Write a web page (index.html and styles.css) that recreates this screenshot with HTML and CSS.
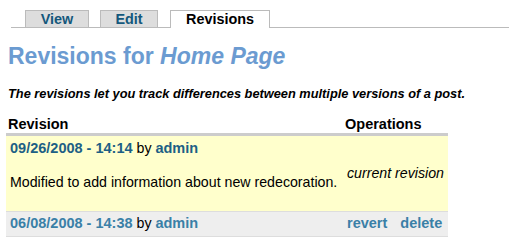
FILE: index.html
```html
<!DOCTYPE html>
<html>
<head>
<meta charset="utf-8">
<link rel="stylesheet" href="styles.css">
</head>
<body>
<div class="page">
  <ul class="tabs">
    <li class="tab tab-view"><a href="#">View</a></li>
    <li class="tab tab-edit"><a href="#">Edit</a></li>
    <li class="tab tab-rev active"><a href="#">Revisions</a></li>
  </ul>
  <h2 class="title">Revisions for <em>Home Page</em></h2>
  <p class="intro">The revisions let you track differences between multiple versions of a post.</p>
  <table class="revisions">
    <thead>
      <tr><th class="col-rev">Revision</th><th class="col-ops">Operations</th></tr>
    </thead>
    <tbody>
      <tr class="row current">
        <td class="cell-rev"><div class="meta"><a class="link" href="#">09/26/2008 - 14:14</a> by <a class="link" href="#">admin</a></div><p class="log">Modified to add information about new redecoration.</p></td>
        <td class="cell-ops"><em>current revision</em></td>
      </tr>
      <tr class="row old">
        <td class="cell-rev"><div class="meta"><a class="link" href="#">06/08/2008 - 14:38</a> by <a class="link" href="#">admin</a></div></td>
        <td class="cell-ops"><a class="link" href="#">revert</a><a class="link op2" href="#">delete</a></td>
      </tr>
    </tbody>
  </table>
</div>
</body>
</html>
```

FILE: styles.css
```css
html, body {
  margin: 0;
  padding: 0;
  background: #ffffff;
}
body {
  font-family: "Liberation Sans", Arial, sans-serif;
  color: #000;
}
.page {
  padding: 10px 0 0 0;
}
.tabs {
  list-style: none;
  margin: 0 7px 0 11px;
  padding: 0 0 0 14px;
  display: flex;
  border-bottom: 1px solid #bbbbbb;
  height: 17px;
}
.tab {
  background: #dddddd;
  border: 1px solid #bbbbbb;
  border-bottom: none;
  height: 16px;
  padding: 0;
  text-align: center;
  font-size: 14.4px;
  line-height: 17px;
  font-weight: bold;
}
.tab-view { width: 62px; }
.tab-edit { width: 56px; margin-left: 11px; }
.tab-rev { width: 98px; margin-left: 12px; }
.tab a {
  color: #14587c;
  text-decoration: none;
}
.tab.active {
  background: #ffffff;
  height: 17px;
}
.tab.active a {
  color: #000000;
}
.title {
  margin: 15px 0 0 8px;
  font-size: 23px;
  line-height: 27px;
  font-weight: bold;
  color: #6b9bd1;
}
.title em {
  font-style: italic;
}
.intro {
  margin: 16px 0 0 8px;
  font-size: 12.8px;
  line-height: 15px;
  font-weight: bold;
  font-style: italic;
}
.revisions {
  margin: 15px 0 0 6px;
  border-collapse: collapse;
  font-size: 14.2px;
  line-height: 17px;
}
.revisions th {
  text-align: left;
  font-weight: bold;
  font-size: 14.5px;
  padding: 0 2px;
  border-bottom: 3px solid #cccccc;
  height: 17px;
}
.col-rev { width: 333px; }
.col-ops { width: 101px; }
.row td {
  border-bottom: 1px solid #dddddd;
  padding: 4px 4px;
}
.row.current { background: #ffffcc; }
.row.old { background: #eeeeee; }
.row.old td { padding: 3px 4px 4px 4px; }
.cell-ops {
  vertical-align: middle;
  white-space: nowrap;
}
.cell-rev { vertical-align: top; }
.meta { height: 17px; }
.log {
  margin: 17px 0 16px 0;
  white-space: nowrap;
}
.link {
  font-weight: bold;
  font-size: 14.5px;
  text-decoration: none;
  color: #1d6085;
}
.row.old .link { color: #3a80a7; }
.op2 { margin-left: 13px; }
```
